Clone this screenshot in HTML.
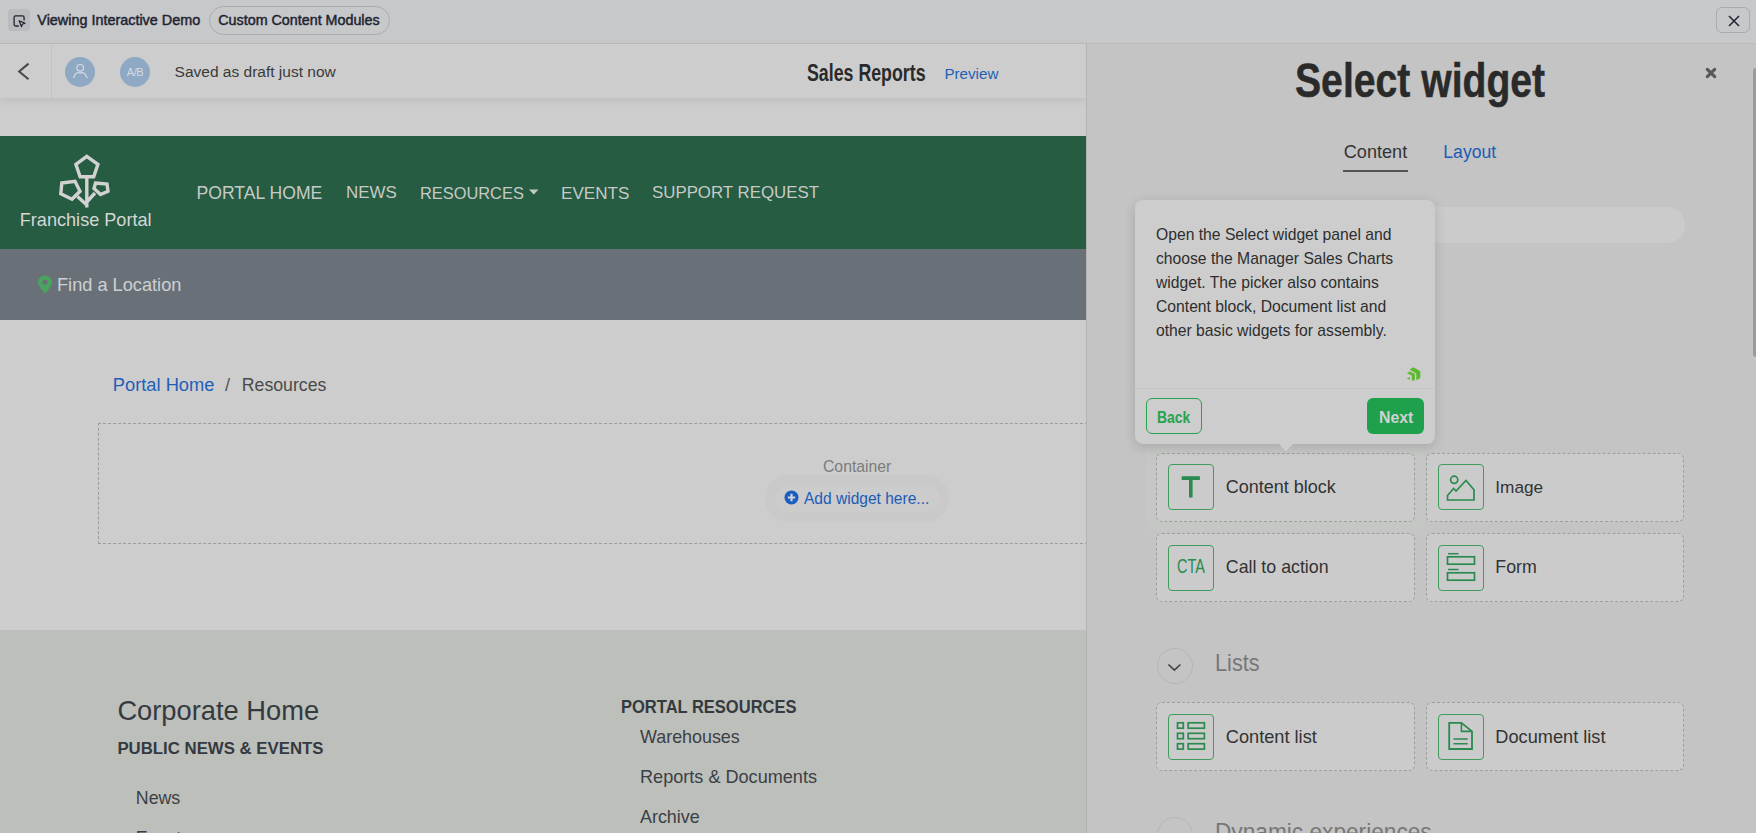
<!DOCTYPE html>
<html><head><meta charset="utf-8">
<style>
*{margin:0;padding:0;box-sizing:border-box}
html,body{width:1756px;height:833px;overflow:hidden;background:#cdcdcd;font-family:"Liberation Sans",sans-serif}
.a{position:absolute}
.t{position:absolute;white-space:nowrap;line-height:1}
</style></head><body>
<!-- top bar -->
<div class="a" style="left:0;top:0;width:1756px;height:43px;background:#c7c8ca"></div>
<div class="a" style="left:0;top:43px;width:1756px;height:1px;background:#b9babd"></div>
<div class="a" style="left:8px;top:9px;width:22px;height:22px;border-radius:4px;background:#babbbe"></div>
<svg class="a" style="left:8px;top:9px" width="22" height="22" viewBox="0 0 22 22"><path d="M10.8 17H7.6A1.5 1.5 0 0 1 6.1 15.5V8.4A1.5 1.5 0 0 1 7.6 6.9H14.6A1.5 1.5 0 0 1 16.1 8.4V11.5" fill="none" stroke="#1e2430" stroke-width="1.3"/><path d="M11.2 11.9L17 14.3 14.3 15.2 13.5 17.7Z" fill="none" stroke="#1e2430" stroke-width="1.2" stroke-linejoin="round"/></svg>
<div class="t" style="left:37.3px;top:12.9px;font-size:14.4px;color:#1e2430;-webkit-text-stroke:.45px #1e2430">Viewing Interactive Demo</div>
<div class="a" style="left:209px;top:6px;width:181px;height:29px;border:1px solid #a9abaf;border-radius:15px"></div>
<div class="t" style="left:218.3px;top:12.9px;font-size:14.3px;color:#1e2430;-webkit-text-stroke:.45px #1e2430">Custom Content Modules</div>
<div class="a" style="left:1716px;top:7px;width:34px;height:26px;border:1px solid #a9abaf;border-radius:6px"></div>
<svg class="a" style="left:1727.5px;top:15px" width="12" height="12" viewBox="0 0 12 12"><path d="M1 1L11 11M11 1L1 11" stroke="#1e2430" stroke-width="1.5"/></svg>

<!-- editor header -->
<div class="a" style="left:0;top:44px;width:1086px;height:54px;background:#cdcdcd;box-shadow:0 3px 8px rgba(0,0,0,.075)"></div>
<div class="a" style="left:51px;top:44px;width:1px;height:54px;background:#c2c2c2"></div>
<svg class="a" style="left:15px;top:60px" width="20" height="22" viewBox="0 0 20 22"><path d="M13.5 3.6L4.2 11.5 13.5 19.2" fill="none" stroke="#4a4a4a" stroke-width="2.1"/></svg>
<div class="a" style="left:65px;top:57px;width:30px;height:30px;border-radius:50%;background:#8fa9c4"></div>
<svg class="a" style="left:65px;top:57px" width="30" height="30" viewBox="65 57 30 30"><circle cx="80.2" cy="67.8" r="3.3" fill="none" stroke="#d3dbe3" stroke-width="1.2"/><path d="M73.6 78.2C74.5 74.5 76.5 72.6 78.5 72.6 79.5 73.2 80.9 73.2 81.9 72.6 83.9 72.6 86 74.5 87 78.2" fill="none" stroke="#d3dbe3" stroke-width="1.2"/></svg>
<div class="a" style="left:120px;top:57px;width:30px;height:30px;border-radius:50%;background:#8fa9c4"></div>
<div class="t" style="left:120px;top:66.5px;width:30px;text-align:center;font-size:11px;color:#d3dbe3;letter-spacing:-0.4px">A/B</div>
<div class="t" style="left:174.6px;top:63.5px;font-size:15.5px;color:#3a3a3a">Saved as draft just now</div>
<div class="t" style="left:807.4px;top:60.6px;font-size:24.7px;font-weight:bold;color:#2a2a2a;transform:scaleX(.72);transform-origin:0 0">Sales Reports</div>
<div class="t" style="left:944.4px;top:66px;font-size:15.2px;color:#1f5fb5">Preview</div>

<!-- green nav -->
<div class="a" style="left:0;top:136px;width:1086px;height:113px;background:#265c42"></div>
<svg class="a" style="left:50px;top:150px" width="70" height="62" viewBox="50 150 70 62">
<g fill="none" stroke="#d2d2d2" stroke-width="3.4" stroke-linejoin="miter">
<path d="M86.8 156.3L97.9 164.3 93.7 176.8H80.1L75.9 164.3Z"/>
<path d="M61.8 183L75 181.3 80 191.3 72 199.3 60.8 193.8Z"/>
<path d="M95.5 183L107 184 108 191.2 100.5 194.6 94 188.5Z"/>
<path d="M86.8 177V207.5M86.8 205L77.5 196.5M86.8 202L95 193"/>
</g></svg>
<div class="t" style="left:19.8px;top:210.5px;font-size:18.1px;color:#d6d6d6">Franchise Portal</div>
<div class="t" style="left:196.5px;top:185px;font-size:17.6px;color:#c6cac7">PORTAL HOME</div>
<div class="t" style="left:346px;top:185px;font-size:16.9px;color:#c6cac7">NEWS</div>
<div class="t" style="left:420px;top:185px;font-size:16.4px;color:#c6cac7">RESOURCES</div>
<svg class="a" style="left:529px;top:189px" width="10" height="6" viewBox="0 0 10 6"><path d="M0 0.5H9.5L4.75 5.5Z" fill="#c6cac7"/></svg>
<div class="t" style="left:561px;top:185px;font-size:17.1px;color:#c6cac7">EVENTS</div>
<div class="t" style="left:652px;top:185px;font-size:16.85px;color:#c6cac7">SUPPORT REQUEST</div>

<!-- gray bar -->
<div class="a" style="left:0;top:249px;width:1086px;height:71px;background:#6a7078"></div>
<svg class="a" style="left:37px;top:275px" width="16" height="19" viewBox="0 0 16 19"><path d="M8 0.5C4 0.5 1 3.5 1 7.2 1 11.5 8 18.5 8 18.5S15 11.5 15 7.2C15 3.5 12 0.5 8 0.5Z" fill="#4aa35e"/><circle cx="8" cy="7" r="2.6" fill="#6a7078"/></svg>
<div class="t" style="left:57px;top:276px;font-size:18.2px;color:#cdd0d3">Find a Location</div>

<!-- breadcrumb -->
<div class="t" style="left:112.8px;top:376.3px;font-size:18.3px;color:#1f5fb8">Portal Home</div>
<div class="t" style="left:225px;top:376.3px;font-size:18.3px;color:#555">/</div>
<div class="t" style="left:241.8px;top:376.9px;font-size:17.7px;color:#494949">Resources</div>

<!-- container -->
<div class="a" style="left:98px;top:423px;width:1000px;height:121px;border:1px dashed #9c9c9c"></div>
<div class="t" style="left:823px;top:459px;font-size:15.75px;color:#7c7c7c">Container</div>
<div class="a" style="left:765px;top:474.5px;width:184px;height:47px;border-radius:24px;background:#c8c9c8"></div>
<div class="a" style="left:774.5px;top:484.5px;width:165px;height:27.5px;border-radius:14px;background:#cbcccb"></div>
<svg class="a" style="left:784px;top:490px" width="15" height="15" viewBox="0 0 15 15"><circle cx="7.5" cy="7.5" r="7" fill="#1a5cbf"/><path d="M7.5 3.8V11.2M3.8 7.5H11.2" stroke="#cdd5e0" stroke-width="2.2"/></svg>
<div class="t" style="left:804.3px;top:489.7px;font-size:16.5px;color:#1c5bb8;transform:scaleX(.942);transform-origin:0 0">Add widget here...</div>

<!-- footer -->
<div class="a" style="left:0;top:630px;width:1086px;height:203px;background:#bdbfba"></div>
<div class="t" style="left:117.4px;top:697.4px;font-size:27.3px;color:#343a40">Corporate Home</div>
<div class="t" style="left:117.4px;top:741.3px;font-size:16.8px;font-weight:bold;color:#343a40">PUBLIC NEWS &amp; EVENTS</div>
<div class="t" style="left:135.8px;top:790px;font-size:17.8px;color:#3b4046">News</div>
<div class="t" style="left:135.8px;top:830px;font-size:17.8px;color:#3b4046">Events</div>
<div class="t" style="left:621.2px;top:698px;font-size:18.3px;font-weight:bold;color:#343a40;transform:scaleX(.903);transform-origin:0 0">PORTAL RESOURCES</div>
<div class="t" style="left:640px;top:728.6px;font-size:17.9px;color:#3b4046">Warehouses</div>
<div class="t" style="left:640px;top:767.7px;font-size:18.1px;color:#3b4046">Reports &amp; Documents</div>
<div class="t" style="left:640px;top:808.5px;font-size:17.9px;color:#3b4046">Archive</div>

<!-- right panel -->
<div id="panel" class="a" style="left:1086px;top:44px;width:670px;height:789px;background:#c4c4c4;border-left:1px solid #b3b3b3"></div>
<div class="a" style="left:1753px;top:68px;width:6px;height:289px;border-radius:3px;background:#9b9b9b"></div>
<div class="t" style="left:1295.2px;top:55.8px;font-size:48.7px;font-weight:bold;color:#2a2a2a;-webkit-text-stroke:.5px #2a2a2a;transform:scaleX(.804);transform-origin:0 0">Select widget</div>
<svg class="a" style="left:1704.8px;top:67px" width="12" height="12" viewBox="0 0 12 12"><path d="M2.3 2.3L9.7 9.7M9.7 2.3L2.3 9.7" stroke="#585858" stroke-width="3.1" stroke-linecap="round"/></svg>
<div class="t" style="left:1343.8px;top:143px;font-size:18.1px;color:#333">Content</div>
<div class="a" style="left:1343px;top:170px;width:65px;height:2px;background:#555"></div>
<div class="t" style="left:1443.3px;top:144.3px;font-size:17.65px;color:#1d5cb6">Layout</div>
<div class="a" style="left:1157px;top:207px;width:528px;height:36px;border-radius:18px;background:#cbcbcb"></div>

<!-- spotlight -->
<div class="a" style="left:1146px;top:443px;width:279px;height:88px;border-radius:10px;background:#c5c7c5"></div>

<!-- tiles -->
<div class="a" style="left:1156px;top:453px;width:259px;height:69px;border:1px dashed #9e9e9e;border-radius:6px;background:#cbcbcb"></div>
<div class="a" style="left:1426px;top:453px;width:258px;height:69px;border:1px dashed #9e9e9e;border-radius:6px;background:#cbcbcb"></div>
<div class="a" style="left:1156px;top:533px;width:259px;height:69px;border:1px dashed #9e9e9e;border-radius:6px;background:#cbcbcb"></div>
<div class="a" style="left:1426px;top:533px;width:258px;height:69px;border:1px dashed #9e9e9e;border-radius:6px;background:#cbcbcb"></div>
<div class="a" style="left:1156px;top:702px;width:259px;height:69px;border:1px dashed #9e9e9e;border-radius:6px;background:#cbcbcb"></div>
<div class="a" style="left:1426px;top:702px;width:258px;height:69px;border:1px dashed #9e9e9e;border-radius:6px;background:#cbcbcb"></div>

<!-- icon boxes -->
<div class="a" style="left:1168px;top:464px;width:46px;height:46px;border:1.5px solid #409b5d;border-radius:4px"></div>
<div class="a" style="left:1438px;top:464px;width:46px;height:46px;border:1.5px solid #409b5d;border-radius:4px"></div>
<div class="a" style="left:1168px;top:545px;width:46px;height:46px;border:1.5px solid #409b5d;border-radius:4px"></div>
<div class="a" style="left:1438px;top:545px;width:46px;height:46px;border:1.5px solid #409b5d;border-radius:4px"></div>
<div class="a" style="left:1168px;top:713.5px;width:46px;height:46px;border:1.5px solid #409b5d;border-radius:4px"></div>
<div class="a" style="left:1438px;top:713.5px;width:46px;height:46px;border:1.5px solid #409b5d;border-radius:4px"></div>

<svg class="a" style="left:1160px;top:455px" width="540" height="320" viewBox="1160 455 540 320">
<g fill="#2a8a4f"><path d="M1181.7 476.3H1199.9V480H1192.6V497.5H1189V480H1181.7Z"/></g>
<g fill="none" stroke="#2a8a4f" stroke-width="1.7">
<circle cx="1454.2" cy="479.8" r="3.6"/>
<path d="M1447.5 500V495.5L1453.6 488.5 1456 491 1466 480.5 1474 489.8V500Z"/>
<path d="M1448 553.7H1458.5" stroke-width="1.5"/>
<rect x="1447.5" y="556.8" width="27" height="7.4"/>
<path d="M1448 569.5H1458.5" stroke-width="1.5"/>
<rect x="1447.5" y="572.8" width="27" height="7.4"/>
<rect x="1177.5" y="722.8" width="5.8" height="5.4"/>
<rect x="1188.2" y="722.8" width="16.2" height="5.4"/>
<rect x="1177.5" y="733.3" width="5.8" height="5.4"/>
<rect x="1188.2" y="733.3" width="16.2" height="5.4"/>
<rect x="1177.5" y="743.7" width="5.8" height="5.4"/>
<rect x="1188.2" y="743.7" width="16.2" height="5.4"/>
<path d="M1449.2 722.9H1461.4L1472 731.4V749H1449.2Z" stroke-width="1.8"/>
<path d="M1461.4 722.9V731.4H1472" stroke-width="1.6"/>
<path d="M1453.5 739H1467.7M1453.5 743.8H1467.7" stroke-width="1.6"/>
</g></svg>
<div class="t" style="left:1177px;top:557.4px;font-size:19.3px;color:#2a8a4f;transform:scaleX(.753);transform-origin:0 0">CTA</div>

<div class="t" style="left:1225.8px;top:478.3px;font-size:18px;color:#333">Content block</div>
<div class="t" style="left:1495.3px;top:478.6px;font-size:17.2px;color:#333">Image</div>
<div class="t" style="left:1225.8px;top:559.1px;font-size:17.8px;color:#333">Call to action</div>
<div class="t" style="left:1495.3px;top:559.1px;font-size:17.8px;color:#333">Form</div>
<div class="t" style="left:1225.8px;top:727.6px;font-size:18.2px;color:#333">Content list</div>
<div class="t" style="left:1495.3px;top:727.6px;font-size:18.2px;color:#333">Document list</div>

<!-- lists header -->
<div class="a" style="left:1156.5px;top:648.4px;width:36px;height:36px;border-radius:50%;border:1px solid #b6b6b6"></div>
<svg class="a" style="left:1166px;top:660px" width="17" height="12" viewBox="0 0 17 12"><path d="M2.4 4.5L8.4 10.2 14.4 4.5" fill="none" stroke="#444" stroke-width="1.7"/></svg>
<div class="t" style="left:1214.5px;top:651.2px;font-size:24.5px;color:#777;transform:scaleX(.885);transform-origin:0 0">Lists</div>
<div class="a" style="left:1156.5px;top:817.3px;width:36px;height:36px;border-radius:50%;border:1px solid #b6b6b6"></div>
<div class="t" style="left:1214.5px;top:819.7px;font-size:24.5px;color:#777;transform:scaleX(.925);transform-origin:0 0">Dynamic experiences</div>

<!-- tooltip -->
<div class="a" style="left:1135px;top:200px;width:300px;height:244px;border-radius:8px;background:#cdcdcd;box-shadow:0 3px 12px rgba(0,0,0,.15)"></div>
<svg class="a" style="left:1276px;top:443px" width="20" height="9" viewBox="0 0 20 9"><path d="M2 0H18L10 8.5Z" fill="#cdcdcd"/></svg>
<div class="t" style="left:1156px;top:222.5px;font-size:15.7px;line-height:24px;color:#2e2e2e">Open the Select widget panel and<br>choose the Manager Sales Charts<br>widget. The picker also contains<br>Content block, Document list and<br>other basic widgets for assembly.</div>
<svg class="a" style="left:1400px;top:362px" width="26" height="24" viewBox="1400 362 26 24"><path d="M1409.6 369.4L1413.5 367.2 1420.3 371.2V378.1L1416.3 380.3V373.8Z M1407 373.3L1409.8 371.5 1414.8 374.1V379.9L1412 381.1 1411.8 375.6Z M1406.8 378.5L1409.9 376.9V379.7Z" fill="#5cb82e"/></svg>
<div class="a" style="left:1135px;top:388px;width:300px;height:1px;background:#c4c4c4"></div>
<div class="a" style="left:1146px;top:398px;width:56px;height:36px;border:1.5px solid #27a24f;border-radius:6px"></div>
<div class="t" style="left:1157.3px;top:409.6px;font-size:16.8px;font-weight:bold;color:#27a24f;transform:scaleX(.827);transform-origin:0 0">Back</div>
<div class="a" style="left:1367px;top:398px;width:57px;height:36px;background:#1fa04c;border-radius:6px"></div>
<div class="t" style="left:1378.7px;top:409.6px;font-size:16.8px;font-weight:bold;color:#d2d2d2;transform:scaleX(.942);transform-origin:0 0">Next</div>
</body></html>
